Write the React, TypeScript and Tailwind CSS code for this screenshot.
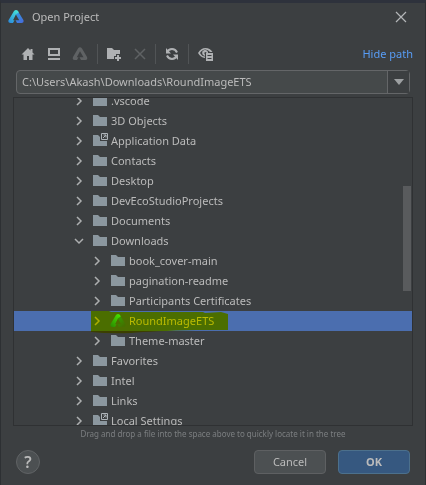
import type { ReactNode } from "react";

type Kind = "folder" | "link" | "project";
type Item = { name: string; level: 0 | 1; kind?: Kind; open?: boolean; selected?: boolean };

const items: Item[] = [
  { name: ".vscode", level: 0 },
  { name: "3D Objects", level: 0 },
  { name: "Application Data", level: 0, kind: "link" },
  { name: "Contacts", level: 0 },
  { name: "Desktop", level: 0 },
  { name: "DevEcoStudioProjects", level: 0 },
  { name: "Documents", level: 0 },
  { name: "Downloads", level: 0, open: true },
  { name: "book_cover-main", level: 1 },
  { name: "pagination-readme", level: 1 },
  { name: "Participants Certificates", level: 1 },
  { name: "RoundImageETS", level: 1, kind: "project", selected: true },
  { name: "Theme-master", level: 1 },
  { name: "Favorites", level: 0 },
  { name: "Intel", level: 0 },
  { name: "Links", level: 0 },
  { name: "Local Settings", level: 0, kind: "link" },
];

function AppLogo() {
  return (
    <svg viewBox="0 0 16 16" className="size-4 shrink-0" aria-hidden="true">
      <defs>
        <linearGradient id="logoLeft" x1="0" y1="1" x2="0.7" y2="0">
          <stop offset="0" stopColor="#2a86dc" />
          <stop offset="1" stopColor="#45e0d8" />
        </linearGradient>
        <linearGradient id="logoRight" x1="0" y1="0" x2="0.6" y2="1">
          <stop offset="0" stopColor="#2fa4dd" />
          <stop offset="1" stopColor="#4470dc" />
        </linearGradient>
      </defs>
      <path d="M9.500 1.500L15.400 11Q16.300 13.800 13.600 14H9L7.500 11.200H11.200L7.600 5Z" fill="url(#logoRight)" />
      <path d="M6 2Q8 -.2 10 2L10.800 3.400L8 5.200L5 11.200H6.500L5 14H2.400Q-.3 13.800.5 11.200Z" fill="url(#logoLeft)" />
    </svg>
  );
}

function FolderIcon({ link }: { link?: boolean }) {
  return (
    <svg viewBox="0 0 16 16" className="size-4 shrink-0" aria-hidden="true">
      <path d="M1 2h5l2 2h7v9H1z" fill="#8b979f" />
      {link && (
        <>
          <path d="M8 0h8v8H8z" fill="#3c3f41" />
          <path d="M9.500.5h6v6h-6zM11 5l3-3M11.500 2H14v2.500" fill="none" stroke="#aeb4b8" />
        </>
      )}
    </svg>
  );
}

function Chevron({ open }: { open?: boolean }) {
  return (
    <svg viewBox="0 0 10 10" className="size-2.5 shrink-0" fill="none" stroke="#adafb0" strokeWidth="1.500" aria-hidden="true">
      <path d={open ? "M1 3l4 4 4-4" : "M3 1l4 4-4 4"} />
    </svg>
  );
}

function Tool({ label, disabled, children }: { label: string; disabled?: boolean; children: ReactNode }) {
  return (
    <button type="button" aria-label={label} disabled={disabled} className="flex size-[26px] items-center justify-center">
      <svg viewBox="0 0 16 16" className="size-4" fill={disabled ? "#5f6264" : "#afb1b3"} aria-hidden="true">
        {children}
      </svg>
    </button>
  );
}

function Divider({ className }: { className: string }) {
  return <span className={`h-5 w-px shrink-0 bg-[#515456] ${className}`} />;
}

function TreeRow({ item }: { item: Item }) {
  return (
    <li
      role="treeitem"
      aria-expanded={!!item.open}
      aria-selected={!!item.selected}
      className={`relative flex h-5 shrink-0 items-center gap-2 whitespace-nowrap ${item.level ? "pl-[78px]" : "pl-[60px]"} ${item.selected ? "bg-[#4b6eaf]" : ""}`}
    >
      <Chevron open={item.open} />
      <span className="flex items-center gap-[3px]">
        {item.kind === "project" ? <AppLogo /> : <FolderIcon link={item.kind === "link"} />}
        <span className="leading-5">{item.name}</span>
      </span>
      {item.selected && (
        <svg viewBox="0 0 138 24" className="absolute top-0 left-[77px] z-10 h-6 w-[138px] mix-blend-multiply" aria-hidden="true">
          <path d="M0 0H18L20 1H112L114 2L130 1L137 3V19H105Q62 20 40 22Q18 23 0 21Z" fill="#ffff00" />
        </svg>
      )}
    </li>
  );
}

export default function App() {
  return (
    <div className="min-h-screen border-t-3 border-r border-l border-[#2d3033] border-t-[#2e323c] bg-[#3c3f41] font-['Noto_Sans','Open_Sans',sans-serif] text-[11px] text-[#bbbbbb]">
      <header className="flex h-7 items-center gap-2 pr-4 pl-[7px]">
        <AppLogo />
        <h1 className="flex-1">Open Project</h1>
        <button type="button" aria-label="Close" className="flex size-4 items-center justify-center">
          <svg viewBox="0 0 12 12" className="size-3" stroke="#b4b6b8" strokeWidth="1.200" aria-hidden="true">
            <path d="M1 1l10 10M11 1L1 11" />
          </svg>
        </button>
      </header>

      <div className="flex h-9 items-end justify-between pr-3 pl-3.5">
        <div className="flex h-[26px] items-center" role="toolbar" aria-label="File actions">
          <Tool label="Home">
            <path d="M8 2L1.500 8.500H3.500V14H7V10H9V14H12.500V8.500H14.500L12.500 6.500V3H10.500V4.500Z" />
          </Tool>
          <Tool label="Desktop">
            <path fillRule="evenodd" d="M2 2h12v8H2zM4 4v4h8V4zM2 12h12v2H2z" />
          </Tool>
          <Tool label="Project directory" disabled>
            <path d="M6 2.500Q8 .2 10 2.500L15 11Q16 13.800 13.300 14H9L7.500 11.200H11.500L8 5.200L4.800 11.200H6.500L5 14H2.700Q0 13.800 1 11Z" />
          </Tool>
          <Divider className="mr-[3px] ml-1" />
          <Tool label="New folder">
            <path d="M1 2h5l2 2h6v4h-4v2H8v3H1zM11 9h2v2h2v2h-2v2h-2v-2H9v-2h2z" />
          </Tool>
          <Tool label="Delete" disabled>
            <path d="M3 3l10 10M13 3l-10 10" fill="none" stroke="#5f6264" strokeWidth="1.500" />
          </Tool>
          <Divider className="mr-[3px] ml-0.5" />
          <Tool label="Refresh">
            <path d="M3 6.500Q4.500 3 8 3Q11.500 3 13 6.500M13 9.500Q11.500 13 8 13Q4.500 13 3 9.500" fill="none" stroke="#afb1b3" strokeWidth="2" />
            <path d="M2 2V7.500H7ZM14 14V8.500H9Z" />
          </Tool>
          <Divider className="mr-1 ml-[3px]" />
          <Tool label="Show hidden files">
            <path fillRule="evenodd" d="M0 7Q3 2 7.500 2Q12 2 14.500 6H12Q10 3.500 7.500 3.500Q4 3.500 2 7Q4 10.500 7 10.600V12Q2.500 11.500 0 7Z" />
            <path d="M10 6A3 3 0 1 0 7 10V8.500Q6 8 6.500 6.500Q7.500 5.500 8.500 6.500V7H10ZM8 7h7v8H8z" />
            <path d="M9.500 9.500h4M9.500 12.500h4" stroke="#3c3f41" />
          </Tool>
        </div>
        <a href="#path" className="pb-1 leading-[18px] text-[#589df6]">Hide path</a>
      </div>

      <div className="mx-[15px] mt-[3px] flex h-6 rounded-sm border border-[#646668] bg-[#45494a]">
        <input
          id="path"
          aria-label="Path"
          defaultValue="C:\Users\Akash\Downloads\RoundImageETS"
          className="min-w-0 flex-1 bg-transparent pl-[5px] outline-none"
        />
        <button type="button" aria-label="Path history" className="flex w-[22px] items-center justify-center border-l border-[#646668] bg-[#3c3f41]">
          <svg viewBox="0 0 10 6" className="h-1.5 w-2.5" fill="#9da0a2" aria-hidden="true">
            <path d="M0 0h10L5 6z" />
          </svg>
        </button>
      </div>

      <div className="relative mx-3 mt-[3px] h-[329px] overflow-hidden border border-[#2f3133]">
        <ul role="tree" aria-label="Folders" className="-mt-[7px] flex flex-col">
          {items.map((item) => (
            <TreeRow key={item.name} item={item} />
          ))}
        </ul>
        <div className="absolute top-[88px] right-px h-[105px] w-2 bg-[#595b5d]" />
      </div>

      <p className="mt-0.5 text-center text-[8px] leading-3 text-[#7c7f81]">
        Drag and drop a file into the space above to quickly locate it in the tree
      </p>

      <footer className="mt-2.5 flex items-center gap-3 px-[15px]">
        <button type="button" aria-label="Help" className="mr-auto flex size-6 items-center justify-center rounded-full border border-[#606365] bg-[#4c5052] text-base font-semibold">
          ?
        </button>
        <button type="button" className="h-6 w-[72px] rounded-sm border border-[#5e6062] bg-[#4c5052]">Cancel</button>
        <button type="button" className="h-6 w-[72px] rounded-sm border border-[#4c708c] bg-[#365880] font-bold">OK</button>
      </footer>
    </div>
  );
}
